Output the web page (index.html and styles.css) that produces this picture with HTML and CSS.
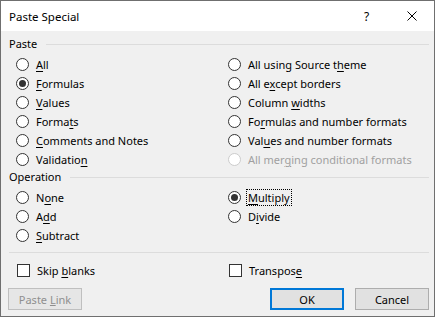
FILE: index.html
```html
<!DOCTYPE html>
<html lang="en">
<head>
    <meta charset="UTF-8">
    <title>Paste Special</title>
    <link rel="stylesheet" href="styles.css">
</head>
<body>
<div class="dialog">
    <div class="titlebar">
        <span class="title">Paste Special</span>
        <span class="tb-btn">?</span>
        <span class="tb-btn">
            <svg width="10" height="10" viewBox="0 0 10 10"><path d="M0.5 0.5 L9.5 9.5 M9.5 0.5 L0.5 9.5" stroke="#000" stroke-width="1" fill="none"/></svg>
        </span>
    </div>

    <div class="content">
        <div class="group-label"><span>Paste</span><span class="rule"></span></div>
        <div class="options paste">
            <label class="opt"><span class="radio"></span><span><u>A</u>ll</span></label>
            <label class="opt"><span class="radio on"></span><span><u>F</u>ormulas</span></label>
            <label class="opt"><span class="radio"></span><span><u>V</u>alues</span></label>
            <label class="opt"><span class="radio"></span><span>Forma<u>t</u>s</span></label>
            <label class="opt"><span class="radio"></span><span><u>C</u>omments and Notes</span></label>
            <label class="opt"><span class="radio"></span><span>Validatio<u>n</u></span></label>

            <label class="opt"><span class="radio"></span><span>All using Source t<u>h</u>eme</span></label>
            <label class="opt"><span class="radio"></span><span>All e<u>x</u>cept borders</span></label>
            <label class="opt"><span class="radio"></span><span>Column <u>w</u>idths</span></label>
            <label class="opt"><span class="radio"></span><span>Fo<u>r</u>mulas and number formats</span></label>
            <label class="opt"><span class="radio"></span><span>Val<u>u</u>es and number formats</span></label>
            <label class="opt disabled"><span class="radio"></span><span>All mer<u>g</u>ing conditional formats</span></label>
        </div>

        <div class="group-label op"><span>Operation</span><span class="rule"></span></div>
        <div class="options operation">
            <label class="opt"><span class="radio"></span><span>N<u>o</u>ne</span></label>
            <label class="opt"><span class="radio"></span><span>A<u>d</u>d</span></label>
            <label class="opt"><span class="radio"></span><span><u>S</u>ubtract</span></label>

            <label class="opt"><span class="radio on"></span><span class="focus"><u>M</u>ultiply</span></label>
            <label class="opt"><span class="radio"></span><span>D<u>i</u>vide</span></label>
        </div>

        <div class="separator"></div>

        <div class="checks">
            <label class="opt"><span class="check"></span><span>Skip <u>b</u>lanks</span></label>
            <label class="opt"><span class="check"></span><span>Transpos<u>e</u></span></label>
        </div>
    </div>

    <div class="buttons">
        <button class="btn disabled">Paste <u>L</u>ink</button>
        <span class="spacer"></span>
        <button class="btn default">OK</button>
        <button class="btn">Cancel</button>
    </div>
</div>
</body>
</html>
```

FILE: styles.css
```css
body {margin: 0; background: #fff; font-family: "Noto Sans", sans-serif; font-size: 11px; color: #000;}

.dialog {width: 435px; height: 317px; box-sizing: border-box; border: 1px solid #6f6f6f; background: #f0f0f0; display: flex; flex-direction: column;}

.titlebar {height: 30px; flex: none; background: #fff; display: flex; align-items: center; padding-left: 8px;}
.title {flex: 1; font-size: 11.5px;}
.tb-btn {width: 45px; height: 30px; display: flex; align-items: center; justify-content: center; font-size: 12px;}

.content {padding: 0 5px 0 8px;}

.group-label {height: 16px; margin-top: 5px; display: flex; align-items: center; gap: 9px; line-height: 16px;}
.group-label.op {margin-top: 0;}
.rule {flex: 1; height: 1px; background: #dcdcdc;}

.options {display: grid; grid-auto-flow: column; grid-template-columns: 212px 1fr; margin-left: 7px;}
.paste {grid-template-rows: repeat(6, 19px); margin-top: 3px;}
.operation {grid-template-rows: repeat(3, 19px); margin-top: 3px;}

.opt {display: flex; align-items: center; gap: 7px; height: 19px; white-space: nowrap;}
.opt u {text-underline-offset: 2px;}

.radio {width: 13px; height: 13px; box-sizing: border-box; border: 1px solid #333; border-radius: 50%; background: #fff; display: flex; align-items: center; justify-content: center; flex: none;}
.radio.on::after {content: ""; width: 7px; height: 7px; border-radius: 50%; background: #333;}
.disabled .radio {border-color: #cccccc;}
.opt.disabled {color: #a0a0a0;}

.focus {outline: 1px dotted #000; padding: 0 1px; margin-left: -1px; line-height: 15px;}

.separator {height: 1px; background: #dcdcdc; margin: 7px 0 0 0;}

.checks {display: grid; grid-template-columns: 212px 1fr; margin: 8px 0 0 8px;}
.check {width: 13px; height: 13px; box-sizing: border-box; border: 1px solid #333; background: #fff; flex: none;}

.buttons {display: flex; gap: 11px; padding: 6px 5px 0 7px; margin-top: auto; margin-bottom: 6px;}
.spacer {flex: 1;}
.btn {width: 74px; height: 22px; box-sizing: border-box; border: 1px solid #adadad; background: #e1e1e1; font-family: inherit; font-size: 11px; color: #000; padding: 0;}
.btn.default {border: 2px solid #0078d7;}
.btn.disabled {border-color: #bfbfbf; background: #e6e6e6; color: #8f8f8f;}
```
